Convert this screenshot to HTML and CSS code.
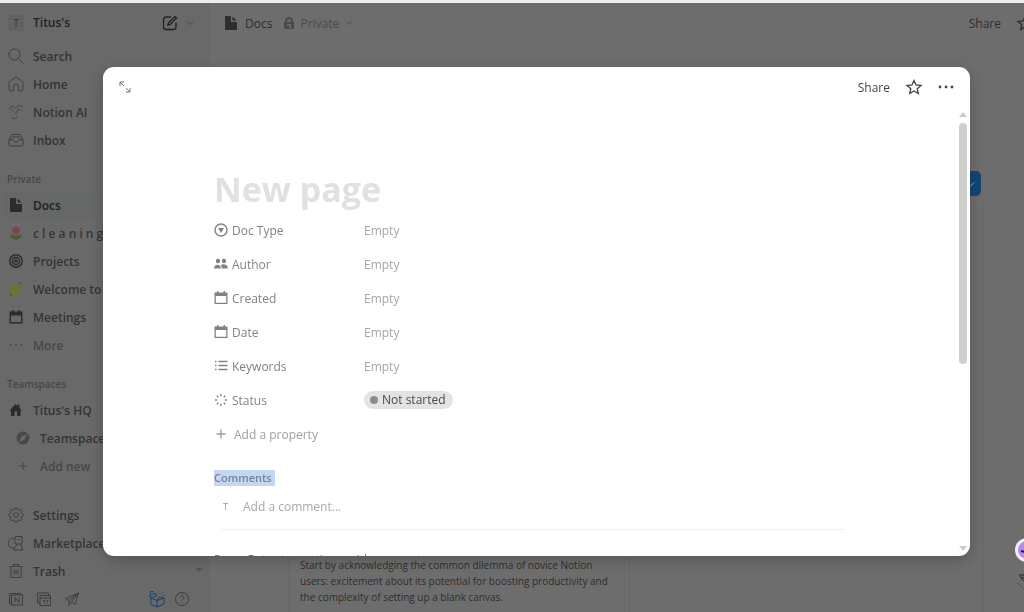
FILE: index.html
```html
<!DOCTYPE html>
<html lang="en">
<head>
    <meta charset="UTF-8">
    <meta name="viewport" content="width=device-width, initial-scale=1.0">
    <title>Docs</title>
    <link rel="stylesheet" href="styles.css">
</head>
<body>
    <div class="app">
        <nav class="sidebar">
            <div class="workspace">
                <span class="avatar">T</span>
                <strong class="workspace-name">Titus's</strong>
                <button class="icon-btn" aria-label="New page">
                    <svg class="icon star" viewBox="0 0 16 16"><path d="M9 2H4a2.500 2.500 0 0 0-2.500 2.500V12A2.500 2.500 0 0 0 4 14.500h7.500A2.500 2.500 0 0 0 14 12V7.500M6 10l.5-2.200L13 1.500l1.500 1.500L8.200 9.400z"/></svg>
                </button>
                <button class="icon-btn" aria-label="Switch workspace">
                    <svg class="chevron" viewBox="0 0 8 8"><path d="M1 2.500l3 3 3-3"/></svg>
                </button>
            </div>
            <div class="group">
                <a class="item" href="#">
                    <svg class="icon" viewBox="0 0 16 16"><circle cx="6.500" cy="6.500" r="5.500"/><path d="M10.500 10.500l5 5"/></svg>
                    Search</a>
                <a class="item" href="#">
                    <svg class="icon" viewBox="0 0 16 16"><path d="M1 7.500C1 6.500 1.500 6 2.500 5L8 1l5.500 4c1 1 1.500 1.500 1.500 2.500V13a2 2 0 0 1-2 2h-2.500V10.500a2.500 2.500 0 0 0-5 0V15H3a2 2 0 0 1-2-2z"/></svg>
                    Home</a>
                <a class="item" href="#">
                    <svg class="icon" viewBox="0 0 16 16"><path d="M2 5.500C1.500 2 5.500 1 7.500 4.500M8.500 3.500C10 .500 13.500 1 14.500 3.500M10.500 4.500c-.5 2.500-1.500 3.500-3 4.500l1.500 1M4.500 5.500v1.500M12 5.500v1M3.500 13c2 2.500 4.500 2 6-.5"/></svg>
                    Notion AI</a>
                <a class="item" href="#">
                    <svg class="icon" viewBox="0 0 16 16"><path d="M1 8l2-4.500C3.500 2.500 4 2.500 5 2.500h6c1 0 1.500 0 2 1L15 8v4a2 2 0 0 1-2 2H3a2 2 0 0 1-2-2zM1 7.500h4c.5 0 .5 2.500 3 2.500s2.500-2.500 3-2.500h4M3.500 5h9"/></svg>
                    Inbox</a>
            </div>
            <div class="group">
                <h2 class="group-title">Private</h2>
                <a class="item current" href="#">
                    <svg class="icon solid" viewBox="0 0 16 16"><path d="M2 1h6v6h6v8H2zM9.500 1.500L13.500 5.500h-4z"/></svg>
                    Docs</a>
                <a class="item" href="#">
                    <svg class="icon solid" viewBox="0 0 16 16"><path fill="#4d5b35" d="M7.500 8h1.200v4c1-1.500 3-2.500 5.300-2-1 3-3 4.500-6 4.500S3 13 2 10c2.500-.5 4.500.5 5.500 2z"/><path fill="#81434b" d="M4.500 2l2 1L8 1l1.500 2 2-1v4.500C11 8.500 9.500 9 8 9S5 8.500 4.500 6.500z"/></svg>
                    c l e a n i n g</a>
                <a class="item" href="#">
                    <svg class="icon bold" viewBox="0 0 16 16"><circle cx="8" cy="8" r="6.200"/><circle cx="8" cy="8" r="3.500"/><circle cx="8" cy="8" r="1"/></svg>
                    Projects</a>
                <a class="item" href="#">
                    <svg class="icon solid" viewBox="0 0 16 16"><path fill="#6e7135" d="M2 5.500L6 3l6 1 1 6-3 4.500-7 .5-1-3z"/><path fill="#525527" d="M10.500 2l3-1-.5 3zM2 12l3 3-3-.5z"/></svg>
                    Welcome to</a>
                <a class="item" href="#">
                    <svg class="icon solid" viewBox="0 0 16 16"><path fill-rule="evenodd" d="M4 1h1.500v1.500h5V1H12v1.500h2.500v12h-13v-12H4zM3 6.500V13h10V6.500z"/></svg>
                    Meetings</a>
                <a class="item muted" href="#">
                    <svg class="icon solid" viewBox="0 0 16 16"><circle cx="3" cy="8" r="1"/><circle cx="8" cy="8" r="1"/><circle cx="13" cy="8" r="1"/></svg>
                    More</a>
            </div>
            <div class="group">
                <h2 class="group-title">Teamspaces</h2>
                <a class="item" href="#">
                    <svg class="icon solid" viewBox="0 0 16 16"><path d="M1.500 8.500L7.500 2l2 2V2.500h2V6l2.500 2.500h-1.500V14H9V9.500H6.500V14H3V8.500z"/></svg>
                    Titus's HQ</a>
                <a class="item nested" href="#">
                    <svg class="icon solid" viewBox="0 0 16 16"><circle cx="8" cy="8" r="6.500" fill="#484848"/><path fill="#6a6a6a" d="M12 4L9.500 9.500 4 12l2.500-5.500z"/></svg>
                    Teamspace</a>
                <a class="item nested muted" href="#">
                    <svg class="icon" viewBox="0 0 16 16"><path d="M8 4v8M4 8h8"/></svg>
                    Add new</a>
            </div>
            <div class="group tools">
                <a class="item" href="#">
                    <svg class="icon" viewBox="0 0 16 16"><path d="M6.500 2.500L7 1h2l.5 1.500 1.500.6 1.500-.8 1.300 1.400-.8 1.500.5 1.300L15 7v2l-1.500.5-.5 1.500.8 1.500-1.300 1.300-1.500-.8-1.500.5L9 15H7l-.5-1.500L5 13l-1.500.8-1.300-1.300L3 11l-.5-1.500L1 9V7l1.500-.5L3 5l-.8-1.300 1.300-1.400 1.500.8z"/><circle cx="8" cy="8" r="2.500"/></svg>
                    Settings</a>
                <a class="item" href="#">
                    <svg class="icon" viewBox="0 0 16 16"><path d="M7 3.500A5 5 0 1 0 6.500 13M7 1.500h7V9H7zM9.500 9L5.500 15h9.500L12.500 9M9.500 4.500h2"/></svg>
                    Marketplace</a>
                <a class="item" href="#">
                    <svg class="icon" viewBox="0 0 16 16"><path d="M1.500 3.500h13M5.500 3.500V1.500h5v2M3 3.500V14.500h10V3.500M6 6.500v5M8 6.500v5M10 6.500v5"/></svg>
                    Trash</a>
            </div>
            <div class="dock">
                <button class="icon-btn" aria-label="Notion">
                    <svg class="icon" viewBox="0 0 16 16"><path d="M1.500 2.500h11l2 1.500v10h-11l-2-1.500zM3.500 14V4h11M7 11.500v-5l4 5v-5"/></svg>
                </button>
                <button class="icon-btn" aria-label="Calendar">
                    <svg class="icon" viewBox="0 0 16 16"><path d="M3.500 12h-2v-10h11v2M4 4.500h10.500v10H4zM4 7h10.500M7 9.500h1.500v3M10.500 9.500H12L11 12.500"/></svg>
                </button>
                <button class="icon-btn" aria-label="Mail">
                    <svg class="icon" viewBox="0 0 16 16"><path d="M1.500 7.500L14.500 2 11 13.500 7.500 10.500 5 14.500V9.500zM5 9.500L14.500 2 7.500 10.500"/></svg>
                </button>
                <button class="icon-btn gift" aria-label="What's new">
                    <svg class="icon large" viewBox="0 0 18 18"><path d="M3 8l6 2.500L16 8v6l-7 3-6-2.500zM9 10.500V17M3 8L1.500 5.500 7.500 3 9 5.500zM9 10.500L11 7l5 1M2.500 3.500v-2h3M12 3v1M15 2v1M14 5v1M16.500 5v1"/></svg>
                </button>
                <button class="icon-btn" aria-label="Help">
                    <svg class="icon" viewBox="0 0 16 16"><circle cx="8" cy="8" r="6.500"/><path d="M6 6.500c0-2.500 4-2.500 4 0C10 8 8 8 8 9.500M8 11v1"/></svg>
                </button>
            </div>
            <span class="sidebar-scroll"></span>
        </nav>

        <main class="page">
            <header class="page-bar">
                <svg class="icon solid" viewBox="0 0 16 16"><path d="M2 1h6v6h6v8H2zM9.500 1.500L13.500 5.500h-4z"/></svg>
                <span>Docs</span>
                <button class="privacy">
                    <svg class="lock" viewBox="0 0 10 12"><path fill-rule="evenodd" d="M1 5V4a4 4 0 0 1 8 0v1h1v7H0V5zM3 5h4V4a2 2 0 0 0-4 0zM3 7v1.500h2.500V11H7V7z"/></svg>
                    Private
                    <svg class="chevron" viewBox="0 0 8 8"><path d="M1 2.500l3 3 3-3"/></svg>
                </button>
                <button class="share">Share</button>
                <button class="icon-btn" aria-label="Favorite">
                    <svg class="icon star" viewBox="0 0 16 16"><path d="M8 1.500l2 4.500 5 .5-3.800 3.200L12.300 14.500 8 12l-4.300 2.500 1.100-4.800L1 6.500 6 6z"/></svg>
                </button>
            </header>
            <div class="toolbar">
                <button class="new-btn" aria-label="New">
                    <svg class="chevron" viewBox="0 0 8 8"><path d="M1 4.500l2 2 4-4"/></svg>
                </button>
            </div>
            <div class="board">
                <p class="summary">Start by acknowledging the common dilemma of novice Notion users: excitement about its potential for boosting productivity and the complexity of setting up a blank canvas.</p>
            </div>
        </main>
    </div>

    <div class="overlay">
        <section class="modal" role="dialog" aria-label="New page">
            <header class="modal-bar">
                <button class="icon-btn expand" aria-label="Open in full page">
                    <svg class="expand-icon" viewBox="0 0 12 12"><path d="M1 5V1h4M1 1l4 4M7 7l4 4M11 7v4H7"/></svg>
                </button>
                <button class="share">Share</button>
                <button class="icon-btn" aria-label="Favorite">
                    <svg class="icon star" viewBox="0 0 16 16"><path d="M8 1.500l2 4.500 5 .5-3.800 3.200L12.300 14.500 8 12l-4.300 2.500 1.100-4.800L1 6.500 6 6z"/></svg>
                </button>
                <button class="icon-btn" aria-label="More actions">
                    <svg class="icon solid" viewBox="0 0 16 16"><circle cx="2" cy="8" r="1.400"/><circle cx="8" cy="8" r="1.400"/><circle cx="14" cy="8" r="1.400"/></svg>
                </button>
            </header>
            <div class="modal-body">
                <div class="content">
                    <h1 class="title">New page</h1>
                    <dl class="props">
                        <div class="prop">
                            <dt><svg class="prop-icon" viewBox="0 0 14 14"><circle cx="7" cy="7" r="6"/><path class="fill" d="M4 5h6L7 10z"/></svg>Doc Type</dt>
                            <dd>Empty</dd>
                        </div>
                        <div class="prop">
                            <dt><svg class="prop-icon solid" viewBox="0 0 14 14"><circle cx="4" cy="4" r="2.200"/><circle cx="10" cy="4" r="2.200"/><path d="M0 11.500c0-5 7-5 7 0zM7.800 11.500c0-2-.6-2.800-1-3.200 2-2 7-1 7.200 3.200z"/></svg>Author</dt>
                            <dd>Empty</dd>
                        </div>
                        <div class="prop">
                            <dt><svg class="prop-icon solid" viewBox="0 0 14 14"><path fill-rule="evenodd" d="M3 0h1.500v1.500h5V0H11v1.500h2.500V13H.5V1.500H3zM1.800 5v6.800h10.400V5z"/></svg>Created</dt>
                            <dd>Empty</dd>
                        </div>
                        <div class="prop">
                            <dt><svg class="prop-icon solid" viewBox="0 0 14 14"><path fill-rule="evenodd" d="M3 0h1.500v1.500h5V0H11v1.500h2.500V13H.5V1.500H3zM1.800 5v6.800h10.400V5z"/></svg>Date</dt>
                            <dd>Empty</dd>
                        </div>
                        <div class="prop">
                            <dt><svg class="prop-icon" viewBox="0 0 14 14"><path d="M1 2.500h1.500M1 6.500h1.500M1 10.500h1.500M4.500 2.500h9M4.500 6.500h9M4.500 10.500h9"/></svg>Keywords</dt>
                            <dd>Empty</dd>
                        </div>
                        <div class="prop">
                            <dt><svg class="prop-icon" viewBox="0 0 14 14"><path d="M7 1v2.200M7 10.800V13M1 7h2.200M10.800 7H13M2.800 2.800l1.400 1.400M9.800 9.800l1.400 1.400M2.800 11.200l1.400-1.400M9.800 4.200l1.400-1.400"/></svg>Status</dt>
                            <dd><span class="status">Not started</span></dd>
                        </div>
                    </dl>
                    <button class="add-prop">
                        <svg class="prop-icon" viewBox="0 0 14 14"><path d="M7 2.500v9M2.500 7h9"/></svg>
                        Add a property
                    </button>
                    <label class="comments-label" for="comment"><mark>Comments</mark></label>
                    <div class="comment-row">
                        <span class="comment-avatar">T</span>
                        <input class="comment-input" type="text" id="comment" placeholder="Add a comment...">
                    </div>
                    <p class="hint">Press Enter to continue with an empty page</p>
                </div>
                <div class="scrollbar">
                    <span class="arrow up"></span>
                    <span class="thumb"></span>
                    <span class="arrow down"></span>
                </div>
            </div>
        </section>
    </div>

    <button class="assistant" aria-label="Assistant">
        <svg viewBox="0 0 24 24"><circle cx="12" cy="12" r="12" fill="#f3eafb"/><circle cx="12" cy="12" r="9" fill="#b48be8"/><path d="M6 13l4 1" stroke="#2b1b4a" stroke-width="2"/></svg>
    </button>
    <svg class="corner-mark" viewBox="0 0 8 20"><path d="M3 5h5M4 6l4 5M8 7L5 9" stroke="#222" fill="none"/><path d="M1 13l7 6" stroke="#555"/></svg>
</body>
</html>
```
FILE: styles.css
```css
* {
    box-sizing: border-box;
}
body {
    margin: 0;
    height: 100vh;
    overflow: hidden;
    font-family: "Open Sans", "Noto Sans", sans-serif;
    font-size: 12px;
    color: #2e2e2e;
    background: #6d6d6d;
}
button {
    font: inherit;
    color: inherit;
    background: none;
    border: 0;
    padding: 0;
}
svg {
    display: block;
    flex: none;
    overflow: visible;
    fill: none;
    stroke: currentColor;
}
.icon {
    width: 16px;
    height: 16px;
}
.icon.large {
    width: 18px;
    height: 18px;
}
.icon.bold {
    stroke-width: 1.5;
}
.icon.star {
    stroke-width: 1.3;
}
.solid {
    fill: currentColor;
    stroke: none;
}
.chevron {
    width: 8px;
    height: 8px;
}
.icon-btn {
    display: flex;
}
.app {
    display: flex;
    height: 100vh;
    border-top: 3px solid #eceeee;
}

/* sidebar */
.sidebar {
    position: relative;
    width: 210px;
    flex: none;
    padding: 0 8px;
    background: #696969;
}
.workspace {
    display: flex;
    align-items: center;
    height: 39px;
    color: #222;
}
.avatar {
    width: 16px;
    line-height: 16px;
    margin-right: 9px;
    text-align: center;
    font-size: 11px;
    background: #626262;
    border-radius: 3px;
    color: #3a3a3a;
}
.workspace-name {
    flex: 1;
    font-weight: 600;
}
.workspace .icon-btn {
    margin-right: 8px;
}
.workspace .chevron {
    color: #444;
}
.group {
    margin-bottom: 13px;
}
.group-title {
    margin: 0 0 0 -1px;
    font-size: 10px;
    font-weight: 600;
    line-height: 24px;
    color: #474747;
}
.item {
    display: flex;
    align-items: center;
    gap: 9px;
    height: 28px;
    color: #343434;
    font-weight: 600;
    text-decoration: none;
    white-space: nowrap;
}
.item .icon {
    color: #404040;
}
.item .icon.solid,
.item .icon.bold {
    color: #2c2c2c;
}
.item.current {
    margin: 0 -4px;
    padding: 0 4px;
    border-radius: 5px;
    background: #666868;
    color: #1d1f1f;
}
.item.nested {
    padding-left: 7px;
}
.item.muted,
.item.muted .icon {
    color: #474747;
}
.tools {
    margin: 21px 0 0;
}
.dock {
    display: flex;
    align-items: center;
    gap: 12px;
    height: 27px;
    color: #3c3c3c;
}
.gift {
    margin-left: auto;
    color: #17426b;
}
.dock .icon-btn:last-child {
    margin-right: 12px;
    margin-left: -4px;
}
.sidebar-scroll {
    position: absolute;
    right: 7px;
    bottom: 40px;
    border: 4px solid transparent;
    border-top-color: #555;
    border-bottom: 0;
}

/* page behind the dialog */
.page {
    flex: 1;
    min-width: 0;
    display: flex;
    flex-direction: column;
}
.page-bar {
    display: flex;
    align-items: center;
    gap: 6px;
    height: 40px;
    padding-left: 13px;
    white-space: nowrap;
}
.privacy {
    display: flex;
    align-items: center;
    gap: 6px;
    margin-left: 6px;
    color: #4b4b4b;
}
.lock {
    width: 10px;
    height: 12px;
    fill: currentColor;
    stroke: none;
}
.page-bar .share {
    margin-left: auto;
}
.page-bar .icon-btn {
    margin: 0 -9px 0 10px;
}
.toolbar {
    display: flex;
    justify-content: flex-end;
    align-items: flex-end;
    height: 153px;
    padding-right: 43px;
}
.new-btn {
    display: flex;
    align-items: center;
    justify-content: flex-end;
    width: 60px;
    height: 25px;
    padding-right: 6px;
    border-radius: 5px;
    background: #124673;
    color: #9ab;
}
.board {
    flex: 1;
    display: flex;
    align-items: flex-end;
    margin: 6px 40px 0 78px;
    border-right: 1px solid #676767;
}
.summary {
    width: 342px;
    margin: 0;
    padding: 0 16px 7px 11px;
    border: solid #676767;
    border-width: 0 1px;
    font-size: 10px;
    line-height: 16px;
}

/* dialog */
.overlay {
    position: fixed;
    inset: 0;
    padding: 67px 54px 56px 103px;
}
.modal {
    display: flex;
    flex-direction: column;
    height: 100%;
    overflow: hidden;
    border-radius: 11px;
    background: #fff;
    box-shadow: 0 4px 14px rgba(0, 0, 0, 0.2);
}
.modal-bar {
    display: flex;
    align-items: center;
    gap: 16px;
    height: 40px;
    flex: none;
    padding: 0 16px;
    color: #444;
}
.expand {
    margin-right: auto;
    color: #777;
}
.expand-icon {
    width: 12px;
    height: 12px;
}
.modal-body {
    display: flex;
    flex: 1;
    min-height: 0;
}
.content {
    flex: 1;
    min-width: 0;
    overflow: hidden;
    padding: 58px 112px 0 111px;
}
.title {
    margin: 0;
    font-size: 34px;
    font-weight: 700;
    line-height: 48px;
    color: #e1e1e1;
}
.props {
    margin: 0;
}
.prop {
    display: flex;
    align-items: center;
    height: 34px;
}
.prop dt {
    display: flex;
    align-items: center;
    gap: 4px;
    width: 150px;
    color: #828282;
}
.prop dd {
    margin: 0;
    color: #a5a5a2;
}
.prop-icon {
    width: 14px;
    height: 14px;
    stroke-width: 1.4;
}
.prop-icon.solid,
.prop-icon .fill {
    fill: currentColor;
    stroke: none;
}
.status {
    display: flex;
    align-items: center;
    gap: 4px;
    padding: 0 7px 0 6px;
    border-radius: 9px;
    line-height: 18px;
    background: #e3e3e1;
    color: #4a4a4a;
}
.status::before {
    content: "";
    width: 8px;
    height: 8px;
    border-radius: 50%;
    background: #8c8c8a;
}
.add-prop {
    display: flex;
    align-items: center;
    gap: 6px;
    height: 34px;
    color: #a0a09d;
}
.comments-label {
    display: block;
    margin-top: 19px;
    font-size: 11px;
    font-weight: 600;
    line-height: 16px;
}
.comments-label mark {
    display: inline-block;
    padding-right: 3px;
    background: #c3d7f3;
    color: #72859f;
}
.comment-row {
    display: flex;
    align-items: center;
    height: 44px;
    margin-left: 8px;
    padding-bottom: 3px;
    border-bottom: 1px solid #efefef;
}
.comment-avatar {
    width: 21px;
    padding-left: 1px;
    font-size: 9px;
    color: #999;
}
.comment-input {
    flex: 1;
    border: 0;
    padding: 0;
    outline: 0;
    font: inherit;
}
.comment-input::placeholder {
    color: #a8a8a4;
}
.hint {
    margin: 20px 0 0;
    line-height: 20px;
    color: #777;
    white-space: nowrap;
}
.scrollbar {
    display: flex;
    flex-direction: column;
    align-items: center;
    width: 14px;
    padding: 5px 0;
}
.arrow {
    border: 4px solid transparent;
}
.up {
    border-bottom: 5px solid #ccc;
    border-top: 0;
}
.down {
    border-top: 5px solid #ccc;
    border-bottom: 0;
    margin-top: auto;
}
.thumb {
    width: 8px;
    height: 55%;
    margin-top: 6px;
    border-radius: 4px;
    background: #cfcfcd;
}

/* floating helper on the right edge */
.assistant {
    position: fixed;
    right: -15px;
    bottom: 50px;
    width: 24px;
    height: 24px;
}
.assistant svg {
    stroke: none;
}
.corner-mark {
    position: fixed;
    right: 0;
    bottom: 22px;
    width: 8px;
    height: 20px;
}
```
